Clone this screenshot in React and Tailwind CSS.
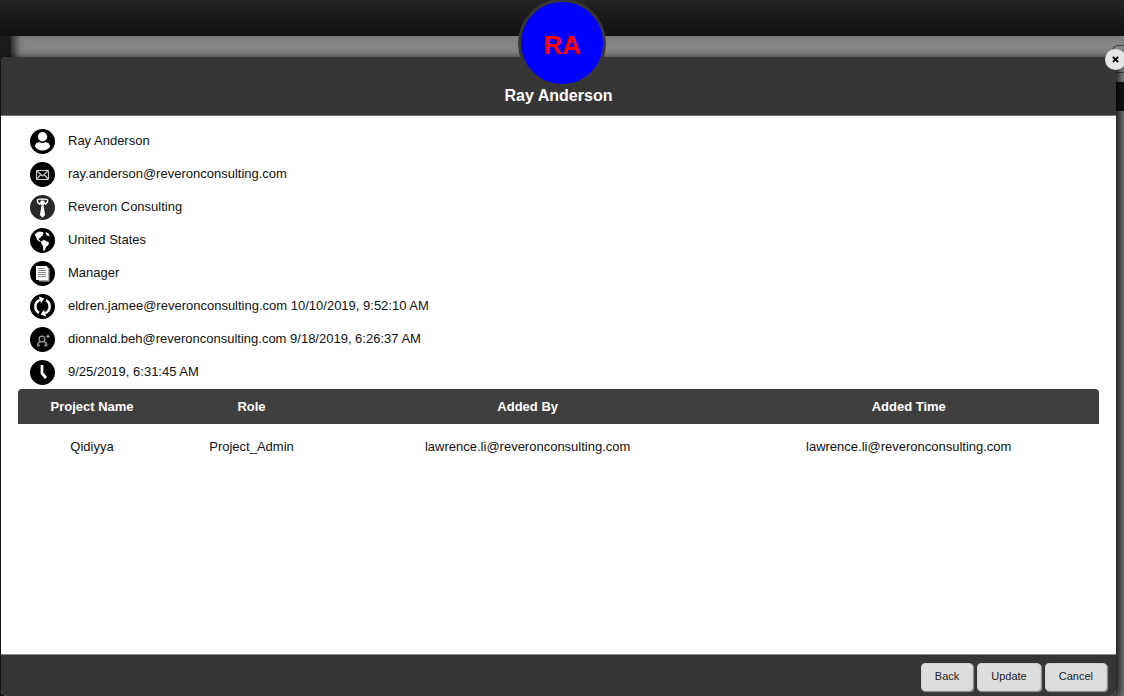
function Disc({ fill = "#000", children }) {
  return (
    <svg viewBox="0 0 26 26" className="size-[26px] shrink-0" aria-hidden="true">
      <circle cx="12.500" cy="12.500" r="12.500" fill={fill} />
      {children}
    </svg>
  );
}

const PersonIcon = () => (
  <Disc>
    <circle cx="12.500" cy="7.800" r="4.700" fill="#fff" />
    <path d="M5 17.800c0-3.200 2.400-4.600 4.600-4.600 1.900 1 3.900 1 5.800 0 2.200 0 4.600 1.400 4.600 4.600-1.600 2.400-4.400 3.600-7.500 3.600s-5.900-1.200-7.500-3.600z" fill="#fff" />
  </Disc>
);

const MailIcon = () => (
  <Disc>
    <g fill="none" stroke="#ccc" strokeWidth="1.200">
      <rect x="6.500" y="8.500" width="12" height="9" rx="1" />
      <path d="M6.500 8.500l6 5.500 6-5.500M6.500 17.500l4.400-5M18.500 17.500l-4.400-5" />
    </g>
  </Disc>
);

const TieIcon = () => (
  <Disc fill="#2a2a2a">
    <path d="M7.300 5.200C7.600 3.500 10.500 4.200 12.500 4.200s4.900-.7 5.200 1c.1 1.200-1.200 3.200-2.400 4l-1.500-1.500h-2.600L9.700 9.200c-1.200-.8-2.500-2.800-2.400-4z" fill="none" stroke="#fff" strokeWidth="1.400" />
    <path d="M10.700 5.500h3.600l.5 2.700-1.200 2.300h-2.200l-1.200-2.300z" fill="#fff" />
    <path d="M11.500 10.500h2l1.600 9.500-2.600 2.800L9.900 20z" fill="#fff" />
  </Disc>
);

const GlobeIcon = () => (
  <Disc>
    <g fill="#fff">
      <path d="M4.600 6.800C5.700 5.200 7.600 3.900 9.500 3.400l3.200.5 1.300 1.500-1.400.5.6 1.500-2 1.200-1.300 1.800-1.300-.3.2 1.700 2 1.500-.7.700-2.900-2L6 8.800z" />
      <path d="M11.300 13l3-1 4.700 2.400-.7 2.900-2.100 1.500-1.700 4-1.300-.4-.3-4.600-1.700-2.300z" />
      <path d="M15.300 4l2.900 1.300 1.500 2.200-1.700.4-1.900-1.700z" />
    </g>
  </Disc>
);

const DocumentIcon = () => (
  <Disc>
    <path d="M9 7h10.500v13.500H9z" fill="#aaa" />
    <path d="M6 5h10.500l1.500 1.500v12.500H6z" fill="#fff" />
    <path d="M8 7.500h6.500M8 9.500h8M8 11.500h8M8 13.500h8M8 15.500h8" stroke="#888" strokeWidth="1" />
  </Disc>
);

const SyncIcon = () => (
  <Disc>
    <g fill="none" stroke="#fff" strokeWidth="2.500">
      <path d="M9 18.800C4 16 4 8.400 9.800 5.800" />
      <path d="M16 6.200C21 9 21 16.600 15.200 19.200" />
    </g>
    <path d="M8.800 2.600l5.600 2-3.400 4.600zM16.200 22.400l-5.600-2 3.400-4.600z" fill="#fff" />
  </Disc>
);

const AddPersonIcon = () => (
  <Disc>
    <g fill="none" stroke="#999" strokeWidth="1.300">
      <circle cx="12" cy="12" r="2.900" />
      <path d="M10 18.500H7.500c.2-2.200 1.600-3.400 3.200-3.800M14.200 18.500h2.600c-.2-2.200-1.700-3.400-3.300-3.800" />
      <path d="M18 7.500v3.600M16.200 9.300h3.600" />
    </g>
  </Disc>
);

const ClockIcon = () => (
  <Disc>
    <path d="M12 5v8.200l4 4.800" fill="none" stroke="#fff" strokeWidth="2.800" />
  </Disc>
);

const details = [
  [PersonIcon, "Ray Anderson"],
  [MailIcon, "ray.anderson@reveronconsulting.com"],
  [TieIcon, "Reveron Consulting"],
  [GlobeIcon, "United States"],
  [DocumentIcon, "Manager"],
  [SyncIcon, "eldren.jamee@reveronconsulting.com 10/10/2019, 9:52:10 AM"],
  [AddPersonIcon, "dionnald.beh@reveronconsulting.com 9/18/2019, 6:26:37 AM"],
  [ClockIcon, "9/25/2019, 6:31:45 AM"],
];

const projects = [
  ["Qidiyya", "Project_Admin", "lawrence.li@reveronconsulting.com", "lawrence.li@reveronconsulting.com"],
];

function Backdrop() {
  return (
    <div className="absolute inset-0 flex flex-col" aria-hidden="true">
      <div className="h-9 bg-linear-to-b from-[#242424] to-[#111]" />
      <div className="flex grow">
        <div className="w-[11px] bg-[#1b1b1b]" />
        <div className="flex grow flex-col bg-[#858585] shadow-[inset_8px_0_8px_-4px_#222]">
          <div className="flex h-[46px] justify-end pt-[9px]">
            <div className="h-7 w-3 rounded-l-md border border-r-0 border-[#444]" />
          </div>
          <div className="h-[29px] bg-[#161616]" />
          <div className="grow bg-[#707070]" />
        </div>
      </div>
    </div>
  );
}

export default function App() {
  return (
    <div className="relative flex min-h-screen flex-col overflow-hidden pt-[57px] font-['Liberation_Sans',Arial,sans-serif] text-[13px] text-[#111]">
      <Backdrop />
      <main className="relative mr-2 ml-px flex grow flex-col rounded-md bg-white shadow-[2px_2px_10px_#000]">
        <header className="flex h-[59px] items-end justify-center rounded-t-sm border-b border-[#777] bg-[#363636] pb-[7px]">
          <h1 className="text-[16px] leading-6 font-bold text-white">Ray Anderson</h1>
        </header>

        <section className="flex grow flex-col px-[17px] pt-[9px]">
          <ul>
            {details.map(([Icon, text]) => (
              <li key={text} className="flex h-[33px] items-center gap-3 pl-3">
                <Icon />
                <span className="pb-0.5">{text}</span>
              </li>
            ))}
          </ul>
          <table className="w-full table-fixed text-center">
            <thead>
              <tr className="h-[35px] text-white">
                <th className="w-[13.7%] rounded-tl-sm bg-[#3f3f3f]">Project Name</th>
                <th className="w-[15.8%] bg-[#3f3f3f]">Role</th>
                <th className="w-[35.3%] bg-[#3f3f3f]">Added By</th>
                <th className="rounded-tr-sm bg-[#3f3f3f]">Added Time</th>
              </tr>
            </thead>
            <tbody>
              {projects.map((row) => (
                <tr key={row[0]} className="h-[46px]">
                  {row.map((cell, i) => (
                    <td key={i}>{cell}</td>
                  ))}
                </tr>
              ))}
            </tbody>
          </table>
        </section>

        <footer className="flex h-[42px] items-center justify-end gap-1 rounded-b-md border-t border-[#888] bg-[#363636] pt-0.5 pr-[9px] text-[11px]">
          {["Back", "Update", "Cancel"].map((label) => (
            <button key={label} type="button" className="h-7 rounded-sm border border-[#d0d0d0] bg-[#ddd] px-[13px] text-[#222] shadow-[1px_1px_1px_#999]">
              {label}
            </button>
          ))}
        </footer>
        <button
          type="button"
          aria-label="Close"
          className="absolute -top-2 -right-[10px] flex size-[21px] items-center justify-center rounded-full bg-[#e6e6e6]"
        >
          <svg viewBox="0 0 8 8" className="size-[7px]" aria-hidden="true">
            <path d="M1 1l6 6M7 1L1 7" stroke="#000" strokeWidth="2.200" />
          </svg>
        </button>
      </main>
      <div className="absolute -top-px left-1/2 flex size-[88px] -translate-x-1/2 items-center justify-center rounded-full border-3 border-[#363636] bg-[#00f] pt-1 text-[26px] font-bold text-[#f00]">
        RA
      </div>
    </div>
  );
}
